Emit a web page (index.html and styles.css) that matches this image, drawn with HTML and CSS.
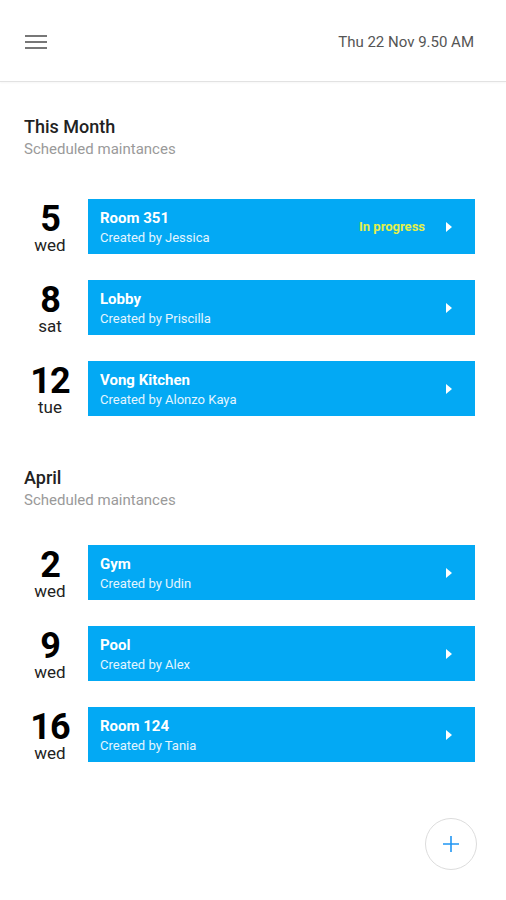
FILE: index.html
```html
<!DOCTYPE html>
<html lang="en">
<head>
    <meta charset="UTF-8">
    <meta name="viewport" content="width=device-width, initial-scale=1.0">
    <title>Maintenance</title>
    <link rel="stylesheet" href="styles.css">
</head>
<body>
    <div class="header">
        <div class="menu-btn">
            <span></span><span></span><span></span>
        </div>
        <div class="clock">Thu 22 Nov 9.50 AM</div>
    </div>

    <!-- This month -->
    <div class="section">
        <h2 class="section-title">This Month</h2>
        <p class="section-sub">Scheduled maintances</p>
        <div class="list">
            <div class="row">
                <div class="date"><div class="num">5</div><div class="day">wed</div></div>
                <div class="card">
                    <div class="card-text">
                        <div class="card-title">Room 351</div>
                        <div class="card-sub">Created by Jessica</div>
                    </div>
                    <div class="status">In progress</div>
                    <div class="chevron"></div>
                </div>
            </div>
            <div class="row">
                <div class="date"><div class="num">8</div><div class="day">sat</div></div>
                <div class="card">
                    <div class="card-text">
                        <div class="card-title">Lobby</div>
                        <div class="card-sub">Created by Priscilla</div>
                    </div>
                    <div class="chevron"></div>
                </div>
            </div>
            <div class="row">
                <div class="date"><div class="num">12</div><div class="day">tue</div></div>
                <div class="card">
                    <div class="card-text">
                        <div class="card-title">Vong Kitchen</div>
                        <div class="card-sub">Created by Alonzo Kaya</div>
                    </div>
                    <div class="chevron"></div>
                </div>
            </div>
        </div>
    </div>

    <!-- April -->
    <div class="section">
        <h2 class="section-title">April</h2>
        <p class="section-sub">Scheduled maintances</p>
        <div class="list">
            <div class="row">
                <div class="date"><div class="num">2</div><div class="day">wed</div></div>
                <div class="card">
                    <div class="card-text">
                        <div class="card-title">Gym</div>
                        <div class="card-sub">Created by Udin</div>
                    </div>
                    <div class="chevron"></div>
                </div>
            </div>
            <div class="row">
                <div class="date"><div class="num">9</div><div class="day">wed</div></div>
                <div class="card">
                    <div class="card-text">
                        <div class="card-title">Pool</div>
                        <div class="card-sub">Created by Alex</div>
                    </div>
                    <div class="chevron"></div>
                </div>
            </div>
            <div class="row">
                <div class="date"><div class="num">16</div><div class="day">wed</div></div>
                <div class="card">
                    <div class="card-text">
                        <div class="card-title">Room 124</div>
                        <div class="card-sub">Created by Tania</div>
                    </div>
                    <div class="chevron"></div>
                </div>
            </div>
        </div>
    </div>

    <button class="fab">
        <svg width="18" height="18" viewBox="0 0 18 18">
            <path d="M9 1v16M1 9h16" stroke="#2196f3" stroke-width="1.6" fill="none"/>
        </svg>
    </button>
</body>
</html>
```

FILE: styles.css
```css
body {
    font-family: Roboto, "Liberation Sans", sans-serif;
    background-color: #ffffff;
    margin: 0;
    color: #111;
}

.header {
    height: 81px;
    border-bottom: 1px solid #e2e2e2;
    box-shadow: 0 1px 2px rgba(0, 0, 0, 0.04);
    display: flex;
    justify-content: space-between;
    align-items: center;
    padding: 0 32px 0 25px;
}

.menu-btn {
    display: flex;
    flex-direction: column;
    gap: 4px;
    margin-top: 2px;
}

.menu-btn span {
    display: block;
    width: 22px;
    height: 2px;
    background-color: #777;
}

.clock {
    font-size: 15px;
    color: #555;
    margin-top: 2px;
}

.section {
    padding: 33px 31px 0 24px;
}

.section + .section {
    padding-top: 50px;
}

.section-title {
    margin: 0;
    font-size: 18px;
    font-weight: 500;
    line-height: 24px;
    color: #222;
}

.section-sub {
    margin: 0;
    font-size: 15px;
    line-height: 21px;
    color: #9a9a9a;
}

.list {
    margin-top: 39px;
    display: flex;
    flex-direction: column;
    gap: 26px;
}

.section + .section .list {
    margin-top: 34px;
}

.row {
    display: flex;
    align-items: flex-start;
    height: 55px;
}

.date {
    width: 52px;
    height: 55px;
    margin-right: 12px;
    text-align: center;
    color: #000;
}

.num {
    font-size: 36px;
    font-weight: 700;
    line-height: 34px;
    margin-top: 3px;
    letter-spacing: -1px;
}

.day {
    font-size: 17px;
    line-height: 18px;
    color: #222;
}

.card {
    flex: 1;
    height: 55px;
    background-color: #03a9f4;
    display: flex;
    align-items: center;
    padding: 0 23px 0 12px;
    color: #fff;
}

.card-text {
    flex: 1;
    margin-top: 2px;
}

.card-title {
    font-size: 15px;
    font-weight: 700;
    line-height: 20px;
}

.card-sub {
    font-size: 13px;
    line-height: 19px;
    color: #e3f5ff;
}

.status {
    font-size: 13px;
    font-weight: 700;
    color: #e3f04a;
    margin-right: 21px;
}

.chevron {
    width: 0;
    height: 0;
    border-top: 5px solid transparent;
    border-bottom: 5px solid transparent;
    border-left: 6px solid #ffffff;
}

.fab {
    position: fixed;
    right: 29px;
    bottom: 30px;
    width: 52px;
    height: 52px;
    border-radius: 50%;
    border: 1px solid #dcdcdc;
    background-color: #fff;
    display: flex;
    align-items: center;
    justify-content: center;
    padding: 0;
    cursor: pointer;
}
```
